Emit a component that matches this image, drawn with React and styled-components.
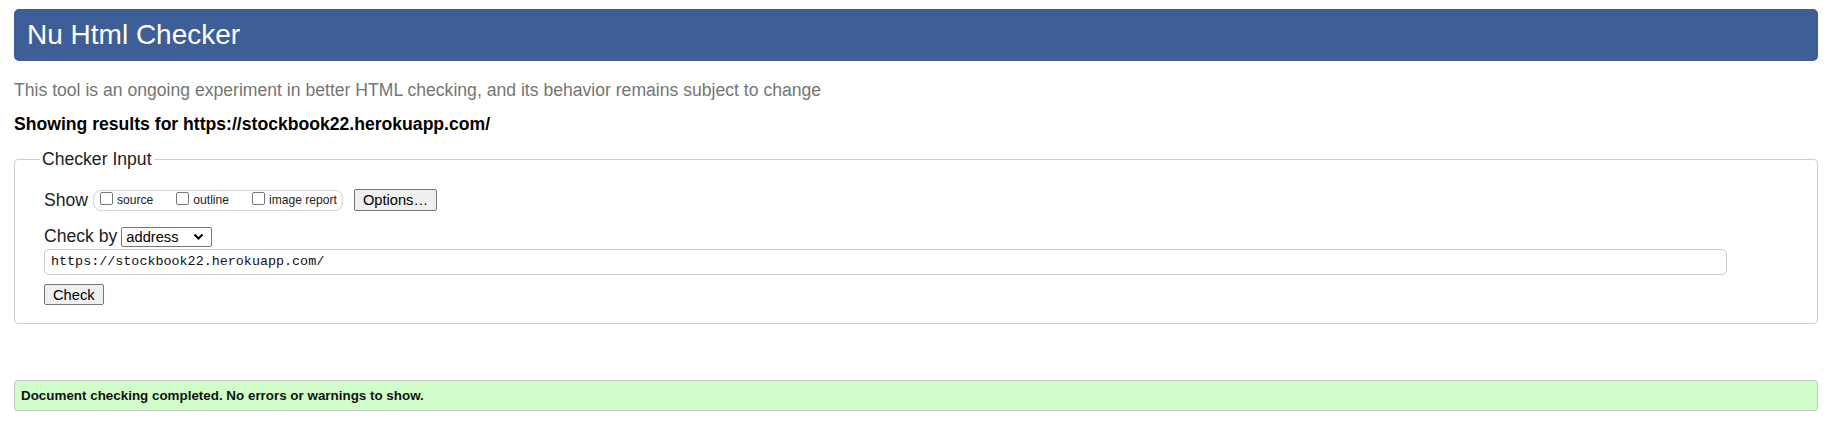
import React from 'react';
import styled, { createGlobalStyle } from 'styled-components';

const GlobalStyle = createGlobalStyle`
	body {
		margin: 0;
		background: #fff;
		font-family: "Liberation Sans", Arial, sans-serif;
		color: #000;
	}
`;

const Page = styled.div`
	padding: 9px 13px 11px 14px;
`;

const Title = styled.h1`
	margin: 0;
	height: 52px;
	line-height: 52px;
	padding-left: 13px;
	background: #3d5e97;
	color: #fff;
	font-size: 28px;
	font-weight: normal;
	border-radius: 5px;
`;

const Intro = styled.p`
	margin: 19px 0 0;
	font-size: 17.6px;
	line-height: 21px;
	color: #757575;
`;

const Results = styled.p`
	margin: 13px 0 0;
	font-size: 17.6px;
	line-height: 20px;
	font-weight: bold;
`;

const Fieldset = styled.fieldset`
	margin: 15px 0 0;
	padding: 19px 28px 18px 29px;
	border: 1px solid #ccc;
	border-radius: 4px;
	display: flex;
	flex-direction: column;
	align-items: flex-start;
`;

const Legend = styled.legend`
	font-size: 17.6px;
	line-height: 21px;
	padding: 0 2px;
	margin-left: -4px;
	color: #222;
`;

const Row = styled.div`
	display: flex;
	align-items: center;
	margin-top: ${p => p.$top || 0}px;
`;

const Label = styled.span`
	font-size: 17.6px;
	line-height: 21px;
	color: #222;
`;

const Group = styled.div`
	display: flex;
	align-items: center;
	height: 19px;
	padding: 0 5px 0 6px;
	border: 1px solid #d3d3d3;
	border-radius: 8px;
	gap: 23px;
	margin-left: 5px;
`;

const Check = styled.label`
	display: flex;
	align-items: center;
	gap: 4px;
	font-size: 12.1px;
	color: #222;
`;

const Box = styled.span`
	width: 11px;
	height: 11px;
	border: 1px solid #767676;
	border-radius: 2px;
	background: #fff;
	margin-top: -4px;
`;

const Button = styled.button`
	font-family: "Liberation Sans", Arial, sans-serif;
	font-size: 14.67px;
	height: ${p => p.$h || 22}px;
	padding: 0 8px;
	border: 1px solid #767676;
	border-radius: 2px;
	background: #efefef;
	color: #000;
	margin-left: ${p => p.$left || 0}px;
	margin-top: ${p => p.$top || 0}px;
`;

const Select = styled.div`
	display: flex;
	align-items: center;
	justify-content: space-between;
	box-sizing: border-box;
	width: 91px;
	height: 20px;
	padding: 0 7px 0 4px;
	margin-left: 4px;
	border: 1px solid #767676;
	border-radius: 2px;
	font-size: 14.67px;
`;

const UrlInput = styled.div`
	box-sizing: border-box;
	width: calc(100% - 62px);
	height: 26px;
	margin-top: 2px;
	padding: 0 6px;
	border: 1px solid #ccc;
	border-radius: 5px;
	font-family: "Liberation Mono", "DejaVu Sans Mono", monospace;
	font-size: 13.4px;
	line-height: 24px;
	color: #111;
`;

const Success = styled.div`
	margin-top: 56px;
	height: 29px;
	line-height: 29px;
	padding-left: 6px;
	background: #d0fec8;
	border: 1px solid #c8c8c8;
	border-radius: 3px;
	font-size: 13.4px;
	font-weight: bold;
	color: #111;
`;

const Chevron = () => (
	<svg width="11" height="8" viewBox="0 0 11 8">
		<path d="M1.5 1.5 L5.5 5.5 L9.5 1.5" fill="none" stroke="#000" strokeWidth="2" />
	</svg>
);

const options = ['source', 'outline', 'image report'];

export default function App() {
	return (
		<Page>
			<GlobalStyle />
			<Title>Nu Html Checker</Title>
			<Intro>This tool is an ongoing experiment in better HTML checking, and its behavior remains subject to change</Intro>
			<Results>Showing results for https://stockbook22.herokuapp.com/</Results>
			<Fieldset>
				<Legend>Checker Input</Legend>
				<Row>
					<Label>Show</Label>
					<Group>
						{options.map(o => (
							<Check key={o}>
								<Box />
								{o}
							</Check>
						))}
					</Group>
					<Button $left={11}>Options…</Button>
				</Row>
				<Row $top={15}>
					<Label>Check by</Label>
					<Select>
						address
						<Chevron />
					</Select>
				</Row>
				<UrlInput>https://stockbook22.herokuapp.com/</UrlInput>
				<Button $h={21} $top={9}>Check</Button>
			</Fieldset>
			<Success>Document checking completed. No errors or warnings to show.</Success>
		</Page>
	);
}
